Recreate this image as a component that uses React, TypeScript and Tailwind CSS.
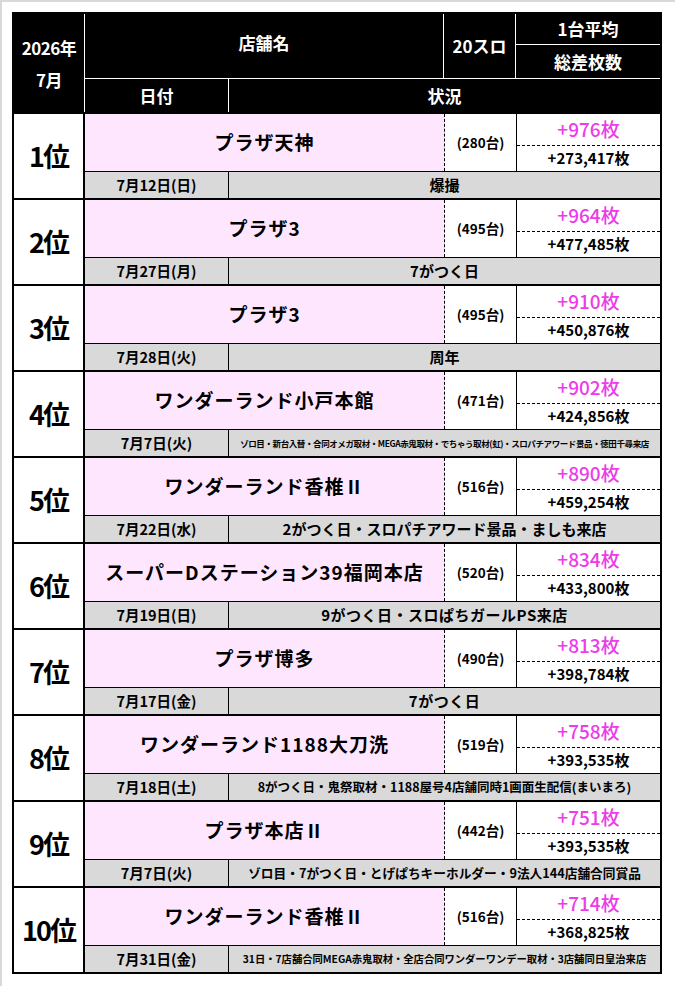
const rows = [
  { rank: "1位", name: "プラザ天神", units: "(280台)", avg: "+976枚", total: "+273,417枚", date: "7月12日(日)", note: "爆撮", cls: "text-[15px] font-bold" },
  { rank: "2位", name: "プラザ3", units: "(495台)", avg: "+964枚", total: "+477,485枚", date: "7月27日(月)", note: "7がつく日", cls: "text-[15px] font-bold" },
  { rank: "3位", name: "プラザ3", units: "(495台)", avg: "+910枚", total: "+450,876枚", date: "7月28日(火)", note: "周年", cls: "text-[15px] font-bold" },
  { rank: "4位", name: "ワンダーランド小戸本館", units: "(471台)", avg: "+902枚", total: "+424,856枚", date: "7月7日(火)", note: "ゾロ目・新台入替・合同オメガ取材・MEGA赤鬼取材・でちゃう取材(虹)・スロパチアワード景品・徳田千尋来店", cls: "text-[8.5px] font-semibold tracking-[-0.4px]" },
  { rank: "5位", name: "ワンダーランド香椎Ⅱ", units: "(516台)", avg: "+890枚", total: "+459,254枚", date: "7月22日(水)", note: "2がつく日・スロパチアワード景品・ましも来店", cls: "text-[15px] font-bold" },
  { rank: "6位", name: "スーパーDステーション39福岡本店", units: "(520台)", avg: "+834枚", total: "+433,800枚", date: "7月19日(日)", note: "9がつく日・スロぱちガールPS来店", cls: "text-[15px] font-bold tracking-[0.5px]" },
  { rank: "7位", name: "プラザ博多", units: "(490台)", avg: "+813枚", total: "+398,784枚", date: "7月17日(金)", note: "7がつく日", cls: "text-[15px] font-bold tracking-[0.5px]" },
  { rank: "8位", name: "ワンダーランド1188大刀洗", units: "(519台)", avg: "+758枚", total: "+393,535枚", date: "7月18日(土)", note: "8がつく日・鬼祭取材・1188屋号4店舗同時1画面生配信(まいまろ)", cls: "text-[12.5px] font-bold" },
  { rank: "9位", name: "プラザ本店Ⅱ", units: "(442台)", avg: "+751枚", total: "+393,535枚", date: "7月7日(火)", note: "ゾロ目・7がつく日・とげぱちキーホルダー・9法人144店舗合同賞品", cls: "text-[12.7px] font-bold" },
  { rank: "10位", name: "ワンダーランド香椎Ⅱ", units: "(516台)", avg: "+714枚", total: "+368,825枚", date: "7月31日(金)", note: "31日・7店舗合同MEGA赤鬼取材・全店合同ワンダーワンデー取材・3店舗同日皇治来店", cls: "text-[10.3px] font-semibold" },
];

export default function App() {
  return (
    <div className="w-[675px] h-[986px] bg-white border-t-2 border-l-2 border-[#d9d9d9] pt-[10px] pl-[10px] font-['Noto_Sans_CJK_JP','Liberation_Sans',sans-serif] text-black">
      <div className="w-[650px] border-2 border-black">
        {/* header */}
        <div className="flex h-[98px] bg-black text-white font-bold text-[17px]">
          <div className="w-[71px] border-r border-white flex flex-col items-center justify-center leading-[32px] pt-[2px] tracking-[-0.5px]">
            <span>2026年</span>
            <span>7月</span>
          </div>
          <div className="flex-1 flex flex-col">
            <div className="flex h-[65px] border-b border-white">
              <div className="w-[359px] border-r border-white flex items-center justify-center pb-[6px]">店舗名</div>
              <div className="w-[72px] border-r border-white flex items-center justify-center">20スロ</div>
              <div className="flex-1 flex flex-col">
                <div className="h-[31px] border-b border-white flex items-center justify-center">1台平均</div>
                <div className="flex-1 flex items-center justify-center">総差枚数</div>
              </div>
            </div>
            <div className="flex flex-1">
              <div className="w-[144px] border-r border-white flex items-center justify-center">日付</div>
              <div className="flex-1 flex items-center justify-center">状況</div>
            </div>
          </div>
        </div>
        {rows.map((r, i) => (
          <div key={i} className="flex h-[86px] border-t-2 border-black">
            <div className="w-[71px] border-r-2 border-black bg-white flex items-center justify-center font-bold text-[27px] tracking-[-2px]">
              {r.rank}
            </div>
            <div className="flex-1 flex flex-col">
              <div className="flex h-[58px] border-b border-black">
                <div className="w-[360px] bg-[#ffe6ff] border-r border-dashed border-black flex items-center justify-center font-bold text-[19px] tracking-[1px]">
                  {r.name}
                </div>
                <div className="w-[72px] border-r border-black flex items-center justify-center font-bold text-[13.5px]">
                  {r.units}
                </div>
                <div className="flex-1 flex flex-col">
                  <div className="h-[32px] border-b border-dashed border-black flex items-center justify-center text-[#ec3ce8] text-[19px] font-medium">
                    {r.avg}
                  </div>
                  <div className="flex-1 flex items-center justify-center font-semibold text-[15px]">{r.total}</div>
                </div>
              </div>
              <div className="flex flex-1 bg-[#d9d9d9]">
                <div className="w-[144px] border-r border-black flex items-center justify-center font-bold text-[14.5px]">
                  {r.date}
                </div>
                <div className={"flex-1 flex items-center justify-center whitespace-nowrap " + r.cls}>
                  {r.note}
                </div>
              </div>
            </div>
          </div>
        ))}
      </div>
    </div>
  );
}
